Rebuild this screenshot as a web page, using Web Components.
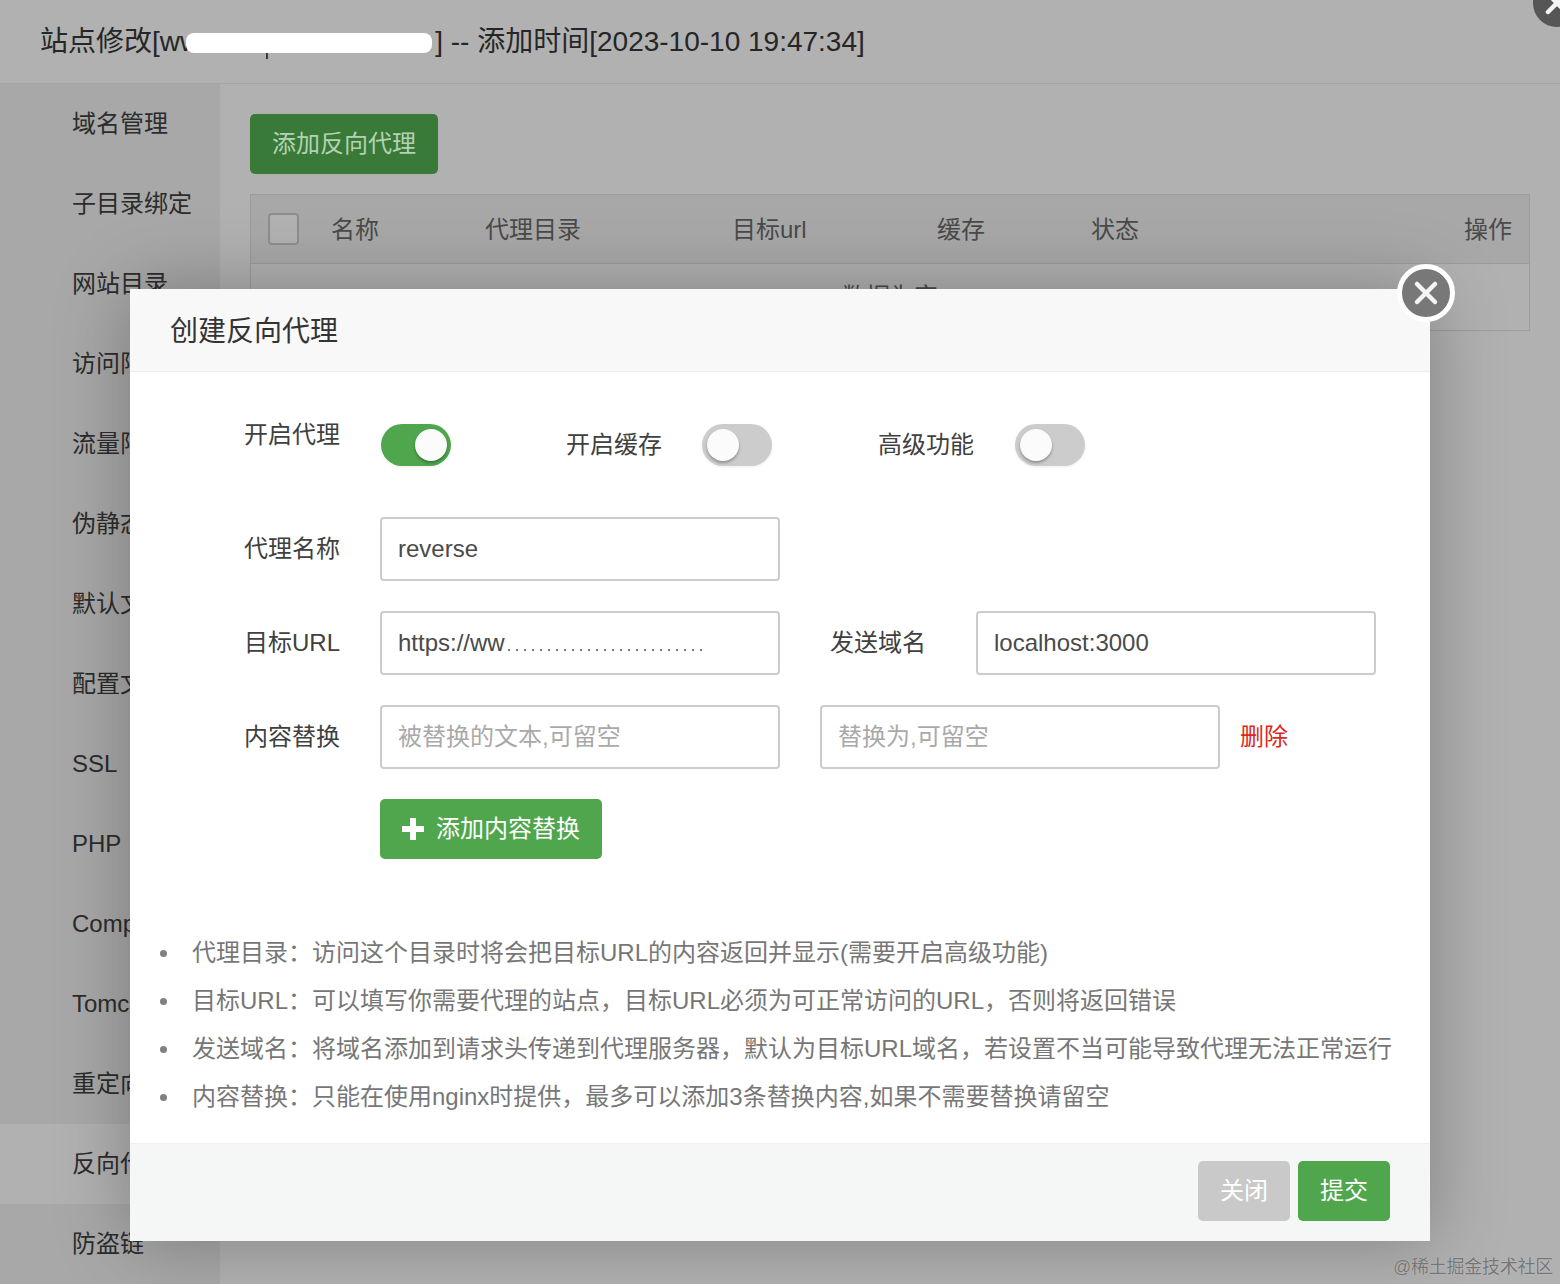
<!DOCTYPE html>
<html lang="zh">
<head>
<meta charset="utf-8">
<title>站点修改</title>
<style>
    html, body { margin: 0; padding: 0; }
    body {
        width: 1560px;
        height: 1284px;
        overflow: hidden;
        background: #b0b0b0;
        font-family: "Liberation Sans", "Noto Sans CJK SC", sans-serif;
    }
</style>
</head>
<body>
<site-window>
    <span slot="title">站点修改[ww<redact-pill></redact-pill>] -- 添加时间[2023-10-10 19:47:34]</span>
    <nav-item>域名管理</nav-item>
    <nav-item>子目录绑定</nav-item>
    <nav-item>网站目录</nav-item>
    <nav-item>访问限制</nav-item>
    <nav-item>流量限制</nav-item>
    <nav-item>伪静态</nav-item>
    <nav-item>默认文档</nav-item>
    <nav-item>配置文件</nav-item>
    <nav-item>SSL</nav-item>
    <nav-item>PHP</nav-item>
    <nav-item>Composer</nav-item>
    <nav-item>Tomcat</nav-item>
    <nav-item>重定向</nav-item>
    <nav-item active>反向代理</nav-item>
    <nav-item>防盗链</nav-item>
    <proxy-table slot="main"></proxy-table>
</site-window>
<close-button style="left:1528px;top:-26px" dark></close-button>
<proxy-modal></proxy-modal>
<water-mark>@稀土掘金技术社区</water-mark>

<script>
class SiteWindow extends HTMLElement {
    constructor() {
        super();
        this.attachShadow({ mode: 'open' });
        this.shadowRoot.innerHTML = `
            <style>
                :host { display: block; width: 1560px; height: 1284px; }
                header {
                    height: 83px;
                    border-bottom: 1px solid #a5a5a5;
                    background: #b1b1b1;
                    padding-left: 40px;
                    font-size: 28px;
                    line-height: 84px;
                    color: #262626;
                    white-space: nowrap;
                }
                .body { display: flex; height: 1200px; }
                nav { width: 220px; background: #a8a8a8; flex: none; }
                main { flex: 1; padding: 30px 30px 0; background: #b1b1b1; }
            </style>
            <header><slot name="title"></slot></header>
            <div class="body">
                <nav><slot></slot></nav>
                <main><slot name="main"></slot></main>
            </div>
        `;
    }
}

class RedactPill extends HTMLElement {
    constructor() {
        super();
        this.attachShadow({ mode: 'open' });
        this.shadowRoot.innerHTML = `
            <style>
                :host {
                    display: inline-block;
                    position: relative;
                    width: 246px;
                    height: 20px;
                    margin: 0 3px 0 -14px;
                    border-radius: 8px;
                    background: #fff;
                    vertical-align: -2px;
                }
                :host::after {
                    content: "";
                    position: absolute;
                    left: 80px;
                    top: 20px;
                    width: 2px;
                    height: 6px;
                    background: #3a3a3a;
                }
            </style>
        `;
    }
}

class NavItem extends HTMLElement {
    constructor() {
        super();
        this.attachShadow({ mode: 'open' });
        this.shadowRoot.innerHTML = `
            <style>
                :host {
                    display: block;
                    height: 80px;
                    padding-left: 72px;
                    font-size: 24px;
                    line-height: 80px;
                    color: #2c2c2c;
                    white-space: nowrap;
                }
                :host([active]) { background: #b1b1b1; }
            </style>
            <slot></slot>
        `;
    }
}

class ProxyTable extends HTMLElement {
    constructor() {
        super();
        this.attachShadow({ mode: 'open' });
        this.shadowRoot.innerHTML = `
            <style>
                :host { display: block; }
                button {
                    display: block;
                    width: 188px;
                    height: 60px;
                    padding: 0;
                    border: 0;
                    border-radius: 5px;
                    background: #3a7a38;
                    color: #b4d2b3;
                    font: 24px/24px "Liberation Sans", "Noto Sans CJK SC", sans-serif;
                }
                .table {
                    margin-top: 20px;
                    height: 135px;
                    border: 1px solid #9c9c9c;
                    font-size: 24px;
                    line-height: 24px;
                    color: #4a4a4a;
                }
                .head {
                    display: grid;
                    grid-template-columns: 80px 154px 248px 204px 154px 1fr auto;
                    align-items: center;
                    height: 68px;
                    background: #a8a8a8;
                    border-bottom: 1px solid #9c9c9c;
                }
                .head > div:not(:first-child) { padding-top: 2px; }
                .check {
                    display: block;
                    width: 27px;
                    height: 28px;
                    margin-left: 17px;
                    border: 2px solid #8e8e8e;
                    border-radius: 4px;
                    background: #b2b2b2;
                }
                .right { padding-right: 17px; }
                .empty { text-align: center; line-height: 66px; }
            </style>
            <button type="button">添加反向代理</button>
            <div class="table">
                <div class="head">
                    <div><span class="check"></span></div>
                    <div>名称</div>
                    <div>代理目录</div>
                    <div style="margin-left:-1px">目标url</div>
                    <div>缓存</div>
                    <div>状态</div>
                    <div class="right">操作</div>
                </div>
                <div class="empty">数据为空</div>
            </div>
        `;
    }
}

class CloseButton extends HTMLElement {
    constructor() {
        super();
        this.attachShadow({ mode: 'open' });
        this.shadowRoot.innerHTML = `
            <style>
                :host {
                    display: block;
                    position: absolute;
                    width: 48px;
                    height: 48px;
                    box-sizing: content-box;
                    border: 5px solid #fff;
                    border-radius: 50%;
                    background: #787878;
                }
                :host([dark]) { border-color: transparent; background: #565656; background-clip: padding-box; }
                svg { display: block; }
            </style>
            <svg width="48" height="48" viewBox="0 0 48 48" fill="none" stroke="#f4f4f4" stroke-width="4.5" stroke-linecap="round">
                <path d="M15 15 L33 33 M33 15 L15 33"/>
            </svg>
        `;
    }
}

class ToggleSwitch extends HTMLElement {
    constructor() {
        super();
        this.attachShadow({ mode: 'open' });
        this.shadowRoot.innerHTML = `
            <style>
                :host {
                    display: flex;
                    flex: none;
                    align-items: center;
                    width: 70px;
                    height: 42px;
                    box-sizing: border-box;
                    padding: 0 5px;
                    border-radius: 21px;
                    background: #cccccc;
                    box-shadow: 0 1px 3px rgba(0,0,0,.08);
                }
                :host([on]) {
                    justify-content: flex-end;
                    padding: 0 4px;
                    background: #4fa64d;
                }
                i {
                    display: block;
                    width: 32px;
                    height: 32px;
                    border-radius: 50%;
                    background: #fbfbfb;
                    box-shadow: 0 2px 3px rgba(0,0,0,.3);
                }
            </style>
            <i></i>
        `;
    }
}

class TextField extends HTMLElement {
    constructor() {
        super();
        this.attachShadow({ mode: 'open' });
        this.shadowRoot.innerHTML = `
            <style>
                :host {
                    display: block;
                    flex: none;
                    width: 400px;
                    height: 64px;
                    box-sizing: border-box;
                    padding: 0 16px;
                    border: 2px solid #cccccc;
                    border-radius: 4px;
                    background: #fff;
                    font-size: 24px;
                    line-height: 60px;
                    color: #4a4a4a;
                    white-space: nowrap;
                    overflow: hidden;
                }
                :host([placeholder]) { color: #a9a9a9; }
            </style>
            <slot></slot>
        `;
    }
}

class UrlMask extends HTMLElement {
    constructor() {
        super();
        this.attachShadow({ mode: 'open' });
        this.shadowRoot.innerHTML = `
            <style>
                :host {
                    display: inline-block;
                    width: 200px;
                    height: 2px;
                    margin-left: 3px;
                    vertical-align: baseline;
                    background: repeating-linear-gradient(90deg, #777 0 2px, transparent 2px 8px);
                }
            </style>
        `;
    }
}

class ActionButton extends HTMLElement {
    constructor() {
        super();
        this.attachShadow({ mode: 'open' });
        this.shadowRoot.innerHTML = `
            <style>
                :host {
                    display: inline-flex;
                    align-items: center;
                    justify-content: center;
                    height: 60px;
                    box-sizing: border-box;
                    padding: 0 22px;
                    border-radius: 5px;
                    background: #4fa64d;
                    color: #fff;
                    font-size: 24px;
                    line-height: 24px;
                    white-space: nowrap;
                }
                :host([muted]) { background: #c9c9c9; }
            </style>
            <slot name="icon"></slot><slot></slot>
        `;
    }
}

class ProxyModal extends HTMLElement {
    constructor() {
        super();
        this.attachShadow({ mode: 'open' });
        this.shadowRoot.innerHTML = `
            <style>
                :host {
                    display: block;
                    position: absolute;
                    left: 130px;
                    top: 289px;
                    width: 1300px;
                    height: 952px;
                    background: #fff;
                    box-shadow: 0 0 70px rgba(0,0,0,.28);
                    font-size: 24px;
                }
                header {
                    height: 82px;
                    padding-left: 40px;
                    border-bottom: 1px solid #eeeeee;
                    background: #f8f8f8;
                    font-size: 28px;
                    line-height: 86px;
                    color: #333;
                }
                close-button { left: 1267px; top: -25px; }
                form { display: block; padding: 52px 0 0; color: #404040; }
                .row { display: flex; align-items: center; height: 64px; margin-bottom: 30px; line-height: 24px; white-space: nowrap; }
                .row.switches { align-items: flex-start; height: 42px; margin-bottom: 51px; }
                .label { width: 210px; margin-right: 40px; text-align: right; flex: none; }
                .switches .label { line-height: 22px; margin-right: 41px; }
                .switches span { line-height: 42px; margin-right: 40px; }
                .cache { margin-left: 115px; }
                .high { margin-left: 106px; }
                .switches .high { margin-right: 41px; }
                .second { margin-left: 50px; margin-right: 50px; }
                .del { margin-left: 20px; color: #e0261c; }
                .replace { margin-left: 40px; }
                .add { margin-left: 250px; }
                ul {
                    margin: 70px 0 0;
                    padding: 0 0 0 30px;
                    list-style: none;
                    font-size: 24px;
                    line-height: 48px;
                    color: #777777;
                }
                li { display: flex; align-items: center; white-space: nowrap; }
                li::before {
                    content: "";
                    flex: none;
                    width: 7px;
                    height: 7px;
                    margin-right: 25px;
                    border-radius: 50%;
                    background: #808080;
                }
                footer {
                    position: absolute;
                    left: 0;
                    right: 0;
                    bottom: 0;
                    display: flex;
                    justify-content: flex-end;
                    gap: 8px;
                    height: 80px;
                    padding: 17px 40px 0 0;
                    border-top: 1px solid #efefef;
                    background: #f5f7f7;
                }
                footer action-button { width: 92px; padding: 0; }
            </style>
            <header>创建反向代理</header>
            <close-button></close-button>
            <form>
                <div class="row switches">
                    <div class="label">开启代理</div>
                    <toggle-switch on></toggle-switch>
                    <span class="cache">开启缓存</span>
                    <toggle-switch></toggle-switch>
                    <span class="high">高级功能</span>
                    <toggle-switch></toggle-switch>
                </div>
                <div class="row">
                    <div class="label">代理名称</div>
                    <text-field>reverse</text-field>
                </div>
                <div class="row">
                    <div class="label">目标URL</div>
                    <text-field>https://ww<url-mask></url-mask></text-field>
                    <div class="second">发送域名</div>
                    <text-field>localhost:3000</text-field>
                </div>
                <div class="row">
                    <div class="label">内容替换</div>
                    <text-field placeholder>被替换的文本,可留空</text-field>
                    <text-field class="replace" placeholder>替换为,可留空</text-field>
                    <div class="del">删除</div>
                </div>
                <div class="row" style="height:60px;margin:0">
                    <action-button class="add">
                        <svg slot="icon" width="22" height="22" viewBox="0 0 22 22" fill="#fff" style="display:block;margin-right:12px">
                            <path d="M8 0 H14 V8 H22 V14 H14 V22 H8 V14 H0 V8 H8 Z"/>
                        </svg>添加内容替换
                    </action-button>
                </div>
            </form>
            <ul>
                <li>代理目录：访问这个目录时将会把目标URL的内容返回并显示(需要开启高级功能)</li>
                <li>目标URL：可以填写你需要代理的站点，目标URL必须为可正常访问的URL，否则将返回错误</li>
                <li>发送域名：将域名添加到请求头传递到代理服务器，默认为目标URL域名，若设置不当可能导致代理无法正常运行</li>
                <li>内容替换：只能在使用nginx时提供，最多可以添加3条替换内容,如果不需要替换请留空</li>
            </ul>
            <footer>
                <action-button muted>关闭</action-button>
                <action-button>提交</action-button>
            </footer>
        `;
    }
}

class WaterMark extends HTMLElement {
    constructor() {
        super();
        this.attachShadow({ mode: 'open' });
        this.shadowRoot.innerHTML = `
            <style>
                :host {
                    display: block;
                    position: absolute;
                    right: 7px;
                    top: 1255px;
                    font-size: 18px;
                    line-height: 24px;
                    letter-spacing: -0.25px;
                    color: #757575;
                    text-shadow: 0 0 1px rgba(255,255,255,.5);
                    white-space: nowrap;
                }
            </style>
            <slot></slot>
        `;
    }
}

customElements.define('site-window', SiteWindow);
customElements.define('redact-pill', RedactPill);
customElements.define('nav-item', NavItem);
customElements.define('proxy-table', ProxyTable);
customElements.define('close-button', CloseButton);
customElements.define('toggle-switch', ToggleSwitch);
customElements.define('text-field', TextField);
customElements.define('url-mask', UrlMask);
customElements.define('action-button', ActionButton);
customElements.define('proxy-modal', ProxyModal);
customElements.define('water-mark', WaterMark);
</script>
</body>
</html>
